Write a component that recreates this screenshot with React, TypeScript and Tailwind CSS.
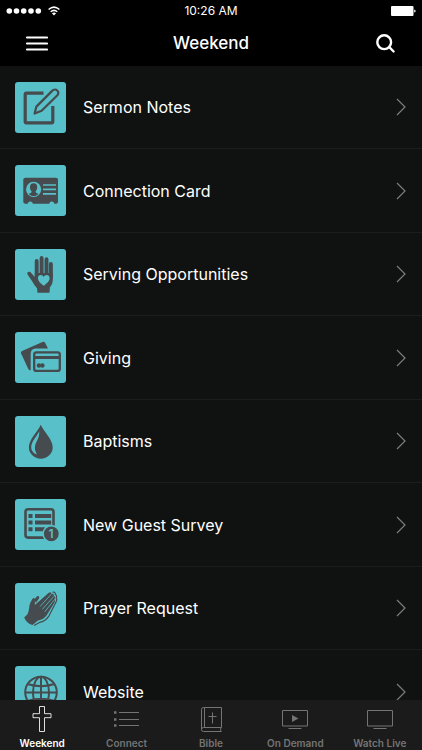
import type { ReactNode } from "react"
import clsx from "clsx"

type MenuItem = {
  label: string
  icon: ReactNode
}

type Tab = {
  label: string
  icon: ReactNode
}

const DARK = "#454b4e"
const TEAL = "#58c0c9"

function NotesIcon() {
  return (
    <svg viewBox="0 0 51 51" className="size-full" fill="none" stroke={DARK} aria-hidden="true">
      <path d="M28.5 11.2H11.5Q10.2 11.2 10.2 12.5V39.5Q10.2 40.8 11.5 40.8H36.5Q37.8 40.8 37.8 39.5V24" strokeWidth="3.2" />
      <path d="M19.6 31.6 21.4 24.6 37.4 8.6A3.3 3.3 0 0 1 42.4 13.3L26.6 28.8Z" strokeWidth="2.2" strokeLinejoin="round" />
    </svg>
  )
}

function CardIcon() {
  return (
    <svg viewBox="0 0 51 51" className="size-full" aria-hidden="true">
      <rect x="8.3" y="12.7" width="34.7" height="26" rx="2" fill={DARK} />
      <circle cx="18.6" cy="24.3" r="7.6" fill={TEAL} />
      <path d="M18.6 18.2c-2.7 0-3.8 1.9-3.6 4.2.1 1.9.8 3 1.6 3.8.2 1.3-.5 1.7-2.9 2.6 1.2 1.5 2.9 2.3 4.9 2.3s3.7-.8 4.9-2.3c-2.4-.9-3.1-1.3-2.9-2.6.8-.8 1.5-1.9 1.6-3.8.2-2.3-.9-4.2-3.6-4.2Z" fill={DARK} />
      <path d="M28 20h13M28 24.4h13M28 28.9h13" stroke={TEAL} strokeWidth="1.6" />
      <path d="M12.8 39a2.5 2.5 0 0 1 5 0ZM34.3 39a2.5 2.5 0 0 1 5 0Z" fill={TEAL} />
    </svg>
  )
}

function HandIcon() {
  return (
    <svg viewBox="0 0 51 51" className="size-full" aria-hidden="true">
      <path d="M21.7 12V27M26.6 9V27M31.5 10.2V27M35.9 14.9V28" stroke={DARK} strokeWidth="3.9" strokeLinecap="round" />
      <path d="M19.8 24H37.8V31.5Q37.6 35.5 34.9 38.5L34.5 43.8H22.5L22 39.2Q19.5 36.5 17.3 32.4L12.6 25.4C11.6 23.5 13.5 21.9 15.3 23.1L19.8 28Z" fill={DARK} />
      <path d="M28.7 36.8C25.5 34.2 22.9 32.2 22.9 29.2 22.9 25.4 27.3 25.2 28.7 28.1 30.1 25.2 34.6 25.4 34.6 29.2 34.6 32.2 31.9 34.2 28.7 36.8Z" fill={TEAL} />
    </svg>
  )
}

function GivingIcon() {
  return (
    <svg viewBox="0 0 51 51" className="size-full" aria-hidden="true">
      <path d="M7 19 27.5 9.9Q29.3 9.2 30.2 10.9L33 16.5H20.5Q15.8 17 15.7 21.5V38.2Q14.2 38.7 13.3 37L6 21.3Q5.4 19.7 7 19Z" fill={DARK} />
      <rect x="19.2" y="20.3" width="25.600" height="18.6" rx="2.2" fill="none" stroke={DARK} strokeWidth="2.3" />
      <path d="M19 25.5h26" stroke={DARK} strokeWidth="3" />
      <circle cx="23.9" cy="33.5" r="2.2" fill={DARK} />
      <circle cx="27.4" cy="33.5" r="2.2" fill={DARK} />
    </svg>
  )
}

function DropIcon() {
  return (
    <svg viewBox="0 0 51 51" className="size-full" aria-hidden="true">
      <path d="M25.8 8.8C29 16 37.7 23.5 37.7 31.2A11.9 11.5 0 0 1 13.9 31.2C13.9 23.5 22.5 16 25.8 8.8Z" fill={DARK} />
      <path d="M24.2 15.2C21.5 21 16.2 25.5 16.2 31.2 16.2 34.6 18.7 37.6 22 38.4 19 33 19.5 29.5 21.8 25.2 23.6 21.8 24.6 18.8 24.2 15.2Z" fill={TEAL} />
    </svg>
  )
}

function SurveyIcon() {
  return (
    <svg viewBox="0 0 51 51" className="size-full" aria-hidden="true">
      <rect x="10.5" y="10.3" width="28" height="28.3" rx="2.5" fill="none" stroke={DARK} strokeWidth="2.6" />
      <path d="M13.5 17h4M13.5 23.5h4M13.5 30.2h4M20 17h16.2M20 23.5h16.2M20 30.2h13" stroke={DARK} strokeWidth="4" />
      <circle cx="36.3" cy="34.8" r="8.2" fill={DARK} stroke={TEAL} strokeWidth="1.6" />
      <text x="36" y="39" textAnchor="middle" fontSize="12" fontWeight="600" fontFamily="Inter, sans-serif" fill={TEAL}>1</text>
    </svg>
  )
}

function PrayerIcon() {
  return (
    <svg viewBox="0 0 51 51" className="size-full" strokeLinecap="round" strokeLinejoin="round" aria-hidden="true">
      <path d="M19.5 16.5 22 13.2Q24.5 12.2 24.2 15L21 20Z" fill={DARK} />
      <path d="M9.2 34.5 12.5 31.2C14.6 27.5 13.7 23.5 15.3 19.8L17.5 15.7Q19.4 14.2 20 16.5L19.8 22 33.8 9.7Q36.2 8.5 36.5 11 39.3 10.2 38.8 13 41 13.6 39.5 16.2 40.8 17.4 39.5 19.5L31.5 32.5Q28.8 36.5 23 37.6L17.5 42Q11.5 40.5 9.2 34.5Z" fill={DARK} />
      <path d="M36 11.5 25.3 23.3M38.5 13.8 27.6 26M39.3 16.8 30 28.5" stroke={TEAL} strokeWidth=".8" fill="none" />
      <path d="M38 9.2Q40.5 8.8 40.4 11.6 42.3 12.3 41.2 15 42.5 16.5 41.3 18.5L34 32.8Q30.5 38.2 24.5 39.4L19.5 42.3" stroke={DARK} strokeWidth="1.2" fill="none" />
    </svg>
  )
}

function GlobeIcon() {
  return (
    <svg viewBox="0 0 51 51" className="size-full" fill="none" stroke={DARK} strokeWidth="2" aria-hidden="true">
      <circle cx="26" cy="26.5" r="15.8" />
      <ellipse cx="26" cy="26.5" rx="8" ry="15.8" />
      <path d="M26 10.7v31.6M10.2 26.5h31.6M13.2 18.3Q26 22 38.8 18.3M13.2 34.7Q26 31 38.8 34.7" />
    </svg>
  )
}

const items: MenuItem[] = [
  { label: "Sermon Notes", icon: <NotesIcon /> },
  { label: "Connection Card", icon: <CardIcon /> },
  { label: "Serving Opportunities", icon: <HandIcon /> },
  { label: "Giving", icon: <GivingIcon /> },
  { label: "Baptisms", icon: <DropIcon /> },
  { label: "New Guest Survey", icon: <SurveyIcon /> },
  { label: "Prayer Request", icon: <PrayerIcon /> },
  { label: "Website", icon: <GlobeIcon /> },
]

const tabs: Tab[] = [
  {
    label: "Weekend",
    icon: <path d="M13.5 2.5h5v7.200h6.5v4h-6.5v13.800h-5v-13.800H7v-4h6.5Z" strokeOpacity=".85" />,
  },
  {
    label: "Connect",
    icon: (
      <>
        <path d="M8 8.5h20M8 15.5h20M8 21.5h20" />
        <path d="M3 8.5h2.5M3 15.5h2.5M3 21.5h2.5" strokeWidth="2.5" />
      </>
    ),
  },
  {
    label: "Bible",
    icon: (
      <>
        <path d="M8.5 3.5H26.5V23.5H8.5Q6.5 23.5 6.5 25.5V5.5Q6.5 3.5 8.5 3.5ZM9.5 3.5V23.5M6.5 25.5Q6.5 27.5 8.5 27.5H26.5M26 23.5Q25 25.5 26 27.5" />
        <path d="M17.5 8.5V19.5M13.5 12.5H21.5" />
      </>
    ),
  },
  {
    label: "On Demand",
    icon: (
      <>
        <path d="M3.5 6.5h25v15.5h-25ZM9.5 24.5h13" />
        <path d="M13 11v7l6.5-3.5Z" fill="currentColor" stroke="none" />
      </>
    ),
  },
  {
    label: "Watch Live",
    icon: <path d="M3.5 6.5h25v15.5h-25ZM9.5 24.5h13" />,
  },
]

function StatusBar() {
  return (
    <div className="grid h-[22px] grid-cols-3 items-center px-1.5">
      <div className="flex items-center gap-1.5">
        <svg viewBox="0 0 36 6" className="h-1.5 w-9" fill="currentColor" aria-hidden="true">
          <circle cx="3.3" cy="3" r="2.8" />
          <circle cx="10.5" cy="3" r="2.8" />
          <circle cx="17.7" cy="3" r="2.8" />
          <circle cx="25" cy="3" r="2.8" />
          <circle cx="32.3" cy="3" r="2.8" />
        </svg>
        <svg viewBox="0 0 12 10" className="h-2.5 w-3" fill="none" stroke="currentColor" strokeWidth="1.5" aria-hidden="true">
          <path d="M.6 3.5Q6-1.3 11.4 3.5M2.7 5.8Q6 3 9.3 5.8" />
          <path d="M6 9.5 3.9 7.3Q6 5.8 8.1 7.3Z" fill="currentColor" stroke="none" />
        </svg>
      </div>
      <span className="text-center text-xs">10:26 AM</span>
      <svg viewBox="0 0 25 10" className="h-2.5 w-[25px] justify-self-end" fill="currentColor" aria-hidden="true">
        <rect width="22.5" height="10" rx="1" />
        <path d="M23.2 3.5Q24.7 4 24.7 5T23.2 6.5Z" />
      </svg>
    </div>
  )
}

export default function App() {
  return (
    <div className="flex h-screen flex-col bg-[#101211] font-['Inter',sans-serif] text-white">
      <header className="shrink-0 bg-black">
        <StatusBar />
        <div className="flex h-11 items-center justify-between px-6">
          <button type="button" aria-label="Menu" className="flex w-6 justify-center">
            <svg viewBox="0 0 24 16" className="h-4 w-6 shrink-0" stroke="currentColor" strokeWidth="2.2" strokeLinecap="round" aria-hidden="true">
              <path d="M3 1.500h20M3 7.500h20M3 13.500h20" />
            </svg>
          </button>
          <h1 className="text-[17px] font-medium">Weekend</h1>
          <button type="button" aria-label="Search" className="flex w-6 justify-center">
            <svg viewBox="0 0 20 20" className="size-5" fill="none" stroke="currentColor" strokeWidth="2.4" strokeLinecap="round" aria-hidden="true">
              <circle cx="8.2" cy="8.2" r="6.9" />
              <path d="M13.3 13.2 17.6 17.500" />
            </svg>
          </button>
        </div>
      </header>

      <main className="min-h-0 flex-1 overflow-y-auto [scrollbar-width:none]">
        <ul>
          {items.map((item) => (
            <li key={item.label} className="border-b border-[#1b1d1c] odd:h-[83px] even:h-[84px]">
              <a href="#" className="flex h-full items-center pr-4 pl-[15px]">
                <span className="size-[51px] shrink-0 overflow-hidden rounded-[3px] bg-[#58c0c9]">{item.icon}</span>
                <span className="ml-[17px] flex-1 text-base">{item.label}</span>
                <svg viewBox="0 0 10 18" className="h-[18px] w-2.5" fill="none" stroke="#7b7d7c" strokeWidth="1.2" aria-hidden="true">
                  <path d="M1 1 9 9 1 17" />
                </svg>
              </a>
            </li>
          ))}
        </ul>
      </main>

      <nav className="grid h-[50px] shrink-0 grid-cols-5 bg-[#1b1b1b]">
        {tabs.map((tab, i) => (
          <a
            key={tab.label}
            href="#"
            aria-current={i === 0 ? "page" : undefined}
            className={clsx("flex flex-col items-center pt-1", i === 0 ? "text-white" : "text-[#747474]")}
          >
            <svg viewBox="0 0 32 32" className="size-8 shrink-0" fill="none" stroke="currentColor" aria-hidden="true">
              {tab.icon}
            </svg>
            <span className="text-[10px] leading-[14px] font-semibold whitespace-nowrap">{tab.label}</span>
          </a>
        ))}
      </nav>
    </div>
  )
}
